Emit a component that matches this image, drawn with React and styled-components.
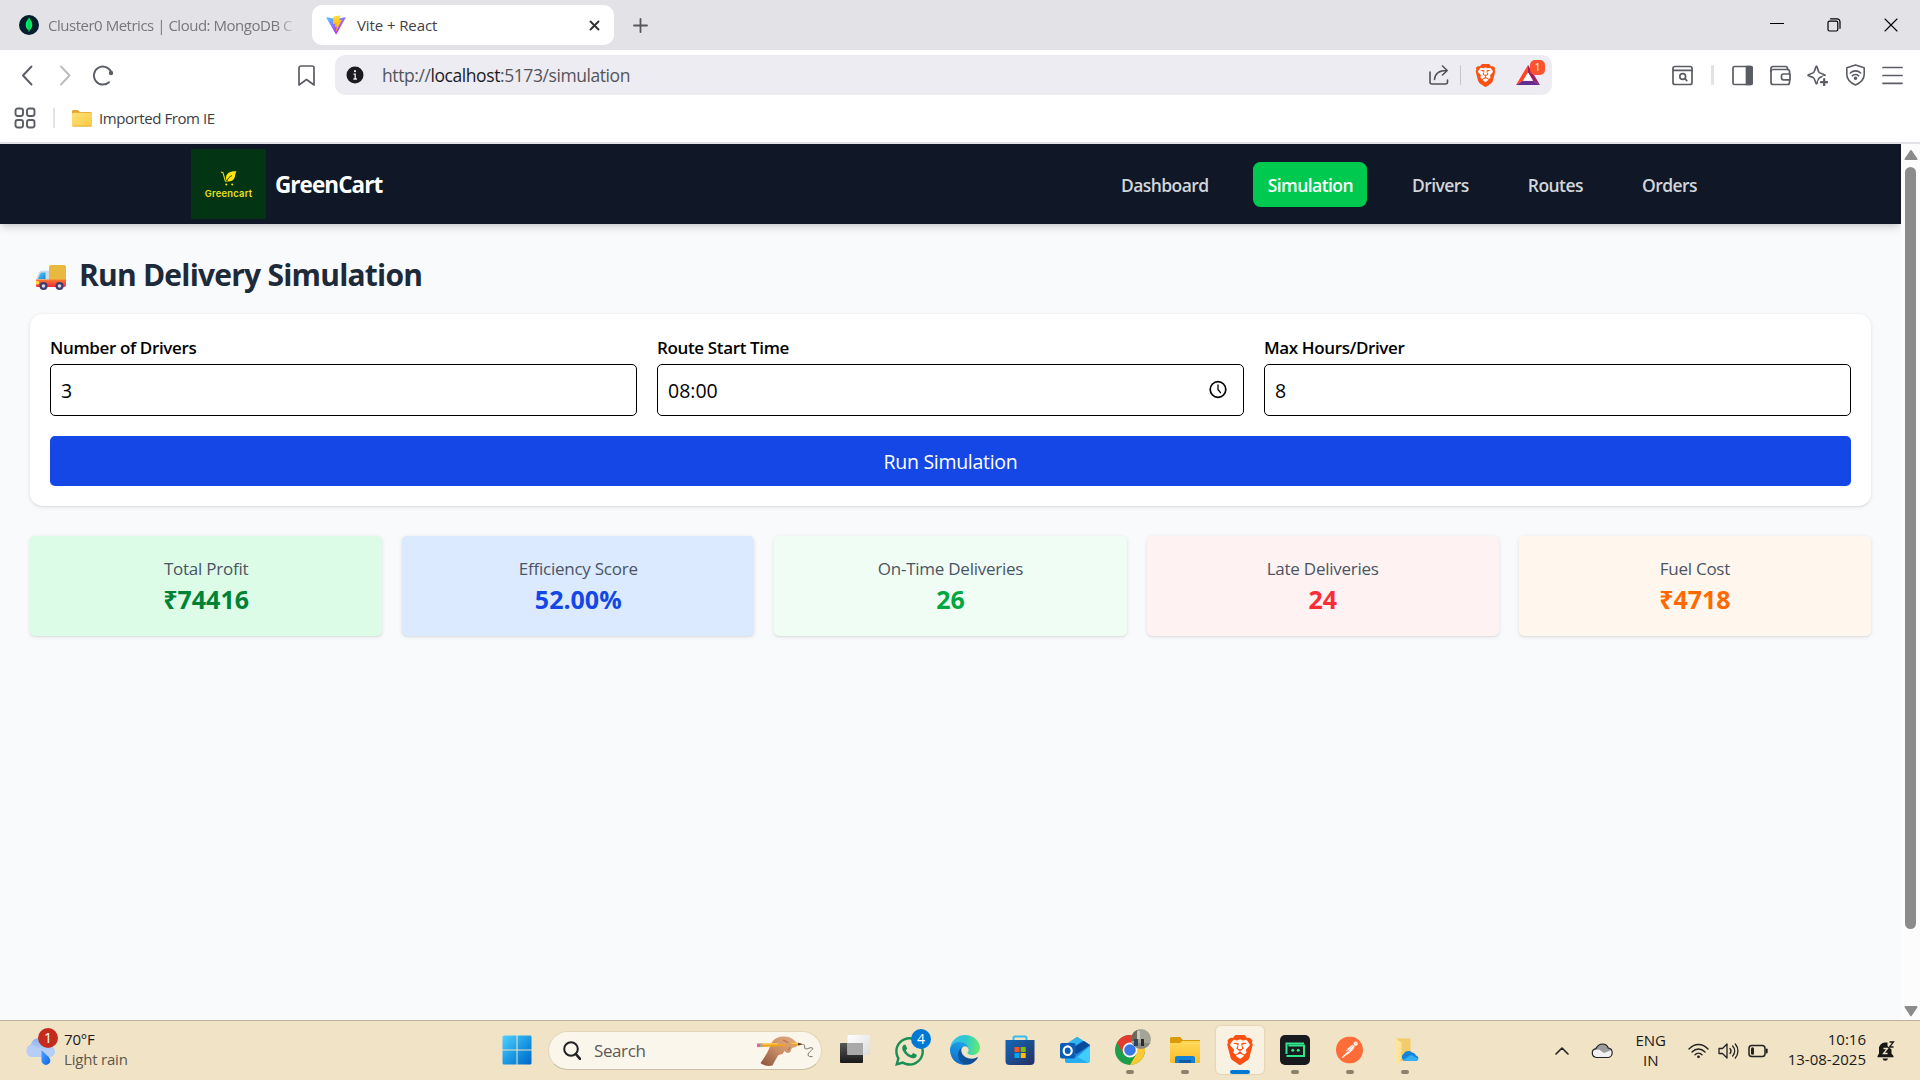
import React from "react";
import styled, { createGlobalStyle } from "styled-components";
import { SiBrave, SiPostman } from "react-icons/si";
import { FaWhatsapp } from "react-icons/fa";

const GlobalStyle = createGlobalStyle`
  * { box-sizing: border-box; }
  body { margin: 0; background: #f9fafb; overflow: hidden; }
  button, input { font: inherit; letter-spacing: inherit; }
  svg { display: block; flex: none; }
`;

const Screen = styled.div`
  width: 1920px;
  height: 1080px;
  display: flex;
  flex-direction: column;
  font-family: "Open Sans", "Noto Sans", sans-serif;
  color: #000;
`;

/* ---------- Browser chrome ---------- */

const TabStrip = styled.div`
  height: 50px;
  flex: none;
  display: flex;
  align-items: center;
  background: #e3e2e7;
`;

const Tab = styled.div`
  width: ${(p) => (p.$active ? 302 : 312)}px;
  height: 40px;
  display: flex;
  align-items: center;
  padding: ${(p) => (p.$active ? "0 14px 0 14px" : "0 14px 0 19px")};
  gap: ${(p) => (p.$active ? 11 : 9)}px;
  border-radius: 10px;
  background: ${(p) => (p.$active ? "#fff" : "transparent")};
  color: ${(p) => (p.$active ? "#3f4046" : "#77777c")};
`;

const TabTitle = styled.span`
  flex: 1;
  font-size: 15px;
  line-height: 20px;
  letter-spacing: ${(p) => p.$tracking || 0}px;
  white-space: nowrap;
  ${(p) => p.$fade && "mask-image: linear-gradient(90deg, #000 91%, transparent 100%);"}
`;

const NewTab = styled.div`
  width: 53px;
  display: flex;
  justify-content: center;
`;

const WindowControls = styled.div`
  margin-left: auto;
  display: flex;
  gap: 43px;
  padding-right: 22px;
`;

const Toolbar = styled.div`
  height: 50px;
  flex: none;
  display: flex;
  align-items: center;
  background: #fff;
`;

const NavButtons = styled.div`
  width: 317px;
  display: flex;
  align-items: center;
  gap: 17px;
  padding-left: 17px;
`;

const BookmarkButton = styled.div`
  margin-left: auto;
`;

const AddressBar = styled.div`
  width: 1217px;
  height: 40px;
  margin-left: 18px;
  padding: 0 11px;
  display: flex;
  align-items: center;
  border-radius: 10px;
  background: #edecf2;
`;

const Url = styled.span`
  flex: 1;
  margin-left: 18px;
  font-size: 17.5px;
  line-height: 24px;
  letter-spacing: -0.42px;
  color: #54555b;
  b { font-weight: 400; color: #1b1b1f; }
`;

const AddressActions = styled.div`
  display: flex;
  align-items: center;
  gap: 9px;
`;

const Divider = styled.span`
  width: ${(p) => p.$w || 3}px;
  height: 20px;
  margin: 0 1.5px;
  flex: none;
  border-radius: 1px;
  background: ${(p) => p.$c || "#e2e1e6"};
`;

const ShieldsButton = styled.div`
  margin-left: 3px;
`;

const RewardIcon = styled.div`
  position: relative;
  margin-left: 10px;
  width: 25px;
`;

const RewardBadge = styled.span`
  position: absolute;
  left: 14px;
  top: -5px;
  width: 15px;
  height: 15px;
  border-radius: 5px;
  background: #ff5230;
  color: #fff;
  font-size: 10px;
  line-height: 15px;
  text-align: center;
`;

const Extensions = styled.div`
  margin-left: auto;
  padding-right: 17px;
  display: flex;
  align-items: center;
  gap: 16.5px;
`;

const BookmarksBar = styled.div`
  height: 44px;
  flex: none;
  display: flex;
  align-items: center;
  padding: 0 0 6px 14px;
  border-bottom: 2px solid #e3e2e7;
  background: #fff;
`;

const BookmarkFolder = styled.div`
  margin-left: 17px;
  display: flex;
  align-items: center;
  gap: 7px;
  font-size: 15px;
  line-height: 20px;
  letter-spacing: -0.43px;
  color: #3c3d43;
`;

const BarDivider = styled(Divider)`
  margin: 0 0 0 17px;
  width: 2px;
`;

/* ---------- Page ---------- */

const Viewport = styled.div`
  height: 876px;
  flex: none;
  display: flex;
  background: #f9fafc;
`;

const Page = styled.div`
  width: 1901px;
`;

const Scrollbar = styled.div`
  width: 19px;
  display: flex;
  flex-direction: column;
  align-items: center;
  padding: 6px 0 3px;
  background: #fcfcfc;
`;

const ScrollThumb = styled.div`
  width: 11px;
  height: 762px;
  margin: 6px 0 auto;
  border-radius: 6px;
  background: #8b8b8b;
`;

const Navbar = styled.header`
  height: 80px;
  padding: 5px 190px 5px 191px;
  display: flex;
  align-items: center;
  justify-content: space-between;
  background: #101726;
  box-shadow: 0 5px 8px -1px rgba(0, 0, 0, 0.13), 0 2px 5px -2px rgba(0, 0, 0, 0.12);
`;

const Brand = styled.div`
  display: flex;
  align-items: center;
  gap: 9px;
  color: #fff;
  font-size: 22.5px;
  font-weight: 700;
  line-height: 35px;
  letter-spacing: -0.95px;
`;

const BrandLogo = styled.div`
  width: 75px;
  height: 70px;
  padding-top: 20px;
  display: flex;
  flex-direction: column;
  align-items: center;
  background: #033413;
`;

const BrandLogoText = styled.span`
  margin-top: 2px;
  font-family: Inter, "Open Sans", sans-serif;
  font-size: 9.4px;
  font-weight: 600;
  line-height: 11px;
  letter-spacing: 0.25px;
  color: #efe01c;
`;

const NavLinks = styled.nav`
  display: flex;
  gap: 30px;
`;

const NavLink = styled.a`
  height: 45px;
  padding: 0 14px 0 15px;
  border-radius: 7.5px;
  font-size: 17.5px;
  font-weight: 600;
  line-height: 47px;
  letter-spacing: -0.56px;
  color: ${(p) => (p.$active ? "#fff" : "#d1d5dc")};
  background: ${(p) => (p.$active ? "#00c950" : "transparent")};
`;

const Content = styled.main`
  padding: 30px;
`;

const Heading = styled.h1`
  margin: 0 0 20px;
  display: flex;
  align-items: center;
  gap: 12px;
  padding: 2px 0 0 5px;
  font-size: 30px;
  font-weight: 700;
  line-height: 38px;
  letter-spacing: -0.78px;
  color: #1e2939;
  svg { margin-top: 5px; }
`;

const FormCard = styled.section`
  padding: 20px;
  display: grid;
  grid-template-columns: repeat(3, 1fr);
  gap: 20px;
  border-radius: 12.5px;
  background: #fff;
  box-shadow: 0 1px 4px rgba(0, 0, 0, 0.1), 0 1px 2px -1px rgba(0, 0, 0, 0.14);
`;

const Field = styled.label`
  display: flex;
  flex-direction: column;
  font-size: 17px;
  font-weight: 600;
  line-height: 27px;
  letter-spacing: -0.36px;
`;

const InputBox = styled.div`
  height: 52px;
  margin-top: 3px;
  display: flex;
  align-items: center;
  padding: 0 15px 0 10px;
  border: 1px solid #000;
  border-radius: 5px;
`;

const Input = styled.input`
  flex: 1;
  min-width: 0;
  padding: 2px 0 0;
  border: 0;
  outline: 0;
  background: none;
  font-size: 19.5px;
  font-weight: 400;
  line-height: 28px;
  letter-spacing: 0;
  color: #000;
`;

const RunButton = styled.button`
  grid-column: 1 / -1;
  height: 50px;
  padding: 0;
  border: 0;
  border-radius: 5px;
  background: #1447e6;
  color: #fff;
  font-size: 19.5px;
  letter-spacing: -0.3px;
`;

const Stats = styled.section`
  margin-top: 30px;
  display: grid;
  grid-template-columns: repeat(5, 1fr);
  gap: 20px;
`;

const StatCard = styled.div`
  height: 100px;
  padding-top: 19px;
  text-align: center;
  border-radius: 5px;
  background: ${(p) => p.$bg};
  box-shadow: 0 1px 4px rgba(0, 0, 0, 0.1), 0 1px 2px -1px rgba(0, 0, 0, 0.14);
`;

const StatLabel = styled.div`
  font-size: 17px;
  line-height: 28px;
  letter-spacing: -0.25px;
  color: #4a5565;
`;

const StatValue = styled.div`
  font-size: 25px;
  font-weight: 700;
  line-height: 33px;
  color: ${(p) => p.$color};
`;

/* ---------- Taskbar ---------- */

const Taskbar = styled.footer`
  height: 60px;
  flex: none;
  display: flex;
  align-items: center;
  border-top: 1px solid #bdb09b;
  background: #f1e3c5;
`;

const Weather = styled.div`
  width: 489px;
  padding-left: 25px;
  display: flex;
  align-items: center;
  gap: 8px;
  letter-spacing: -0.2px;
`;

const BadgeHost = styled.div`
  position: relative;
`;

const CountBadge = styled.span`
  position: absolute;
  left: ${(p) => p.$left}px;
  top: ${(p) => p.$top}px;
  width: 20px;
  height: 20px;
  border-radius: 50%;
  background: ${(p) => p.$bg};
  color: #fff;
  font-size: 14px;
  line-height: 20px;
  text-align: center;
`;

const TwoLines = styled.div`
  font-size: 15px;
  line-height: 20px;
  color: #1a1a1a;
  text-align: ${(p) => p.$align || "left"};
  white-space: nowrap;
  padding-bottom: 3px;
  small { display: block; font-size: 15px; color: #5d584d; }
`;

const SearchPill = styled.div`
  width: 274px;
  height: 39px;
  margin: 0 5px 0 4px;
  padding: 0 7px 0 14px;
  display: flex;
  align-items: center;
  border: 1px solid #e2d6bc;
  border-bottom-color: #c9bda4;
  border-radius: 20px;
  background: #fbf6eb;
  font-size: 17px;
  line-height: 24px;
  letter-spacing: -0.4px;
  color: #5c5a56;
`;

const SearchText = styled.span`
  flex: 1;
  margin-left: 13px;
`;

const AppSlot = styled.div`
  width: 55px;
  height: 59px;
  display: flex;
  flex-direction: column;
  align-items: center;
  padding-top: 5px;
`;

const AppTile = styled.div`
  width: 48px;
  height: 48px;
  display: flex;
  flex-direction: column;
  align-items: center;
  justify-content: space-between;
  padding-top: 9px;
  border-radius: 5px;
  background: ${(p) => (p.$active ? "#f9f1e2" : "transparent")};
  box-shadow: ${(p) => (p.$active ? "0 0 1px 1px rgba(190,170,130,.25)" : "none")};
`;

const RunMark = styled.span`
  width: ${(p) => (p.$active ? 20 : 8)}px;
  height: 4px;
  border-radius: 2px;
  background: ${(p) => (p.$active ? "#0078d4" : "#8b826e")};
`;

const Avatar = styled.span`
  position: absolute;
  left: 16px;
  top: -6px;
`;

const Tray = styled.div`
  margin-left: auto;
  padding-right: 25px;
  display: flex;
  align-items: center;
`;

const Lang = styled(TwoLines)`
  width: 34px;
  margin: 0 20px 0 21px;
  padding-bottom: 1px;
`;

const StatusIcons = styled.div`
  display: flex;
  gap: 9px;
  margin-right: 20px;
`;

const Clock = styled(TwoLines)`
  margin-right: 11px;
`;

const TrayCloud = styled.div`
  margin-left: 22px;
`;

/* ---------- Icons ---------- */

const Stroke = ({ w = 21, h = 21, c = "#5b5d64", sw = 1.7, children }) => (
  <svg width={w} height={h} viewBox={`0 0 ${w} ${h}`} fill="none" stroke={c} strokeWidth={sw} strokeLinecap="round" strokeLinejoin="round">
    {children}
  </svg>
);

const MongoIcon = () => (
  <svg width="20" height="20" viewBox="0 0 20 20">
    <circle cx="10" cy="10" r="10" fill="#001e2b" />
    <path d="M10 2.6C11.7 4.8 13.4 7 13.3 10c-.1 2.600-1.500 4.300-2.900 5.400L10.200 17h-.5l-.2-1.700C8 14.100 6.700 12.500 6.700 10c0-3 1.800-5 3.300-7.400z" fill="#00ed64" />
    <path d="M10 4v12" stroke="#00a35c" strokeWidth=".6" />
  </svg>
);

const ViteIcon = () => (
  <svg width="20" height="20" viewBox="0 0 410 404">
    <defs>
      <linearGradient id="va" x1="6" y1="33" x2="235" y2="344" gradientUnits="userSpaceOnUse">
        <stop stopColor="#41d1ff" /><stop offset="1" stopColor="#bd34fe" />
      </linearGradient>
      <linearGradient id="vb" x1="195" y1="9" x2="236" y2="293" gradientUnits="userSpaceOnUse">
        <stop stopColor="#ffea83" /><stop offset=".08" stopColor="#ffdd35" /><stop offset="1" stopColor="#ffa800" />
      </linearGradient>
    </defs>
    <path d="M399.641 59.525L215.643 388.545C211.844 395.338 202.084 395.378 198.228 388.618L10.582 59.556C6.381 52.19 12.68 43.267 21.028 44.759L205.223 77.682a10 10 0 0 0 3.541-.006L389.122 44.803c8.32-1.516 14.649 7.337 10.519 14.722z" fill="url(#va)" />
    <path d="M292.965 1.574L156.801 28.255a5 5 0 0 0-4.030 4.611L144.395 174.330c-.197 3.332 2.863 5.918 6.115 5.168l37.910-8.749c3.547-.818 6.752 2.306 6.023 5.873l-11.263 55.153c-.758 3.712 2.727 6.886 6.352 5.785l23.415-7.114c3.630-1.102 7.118 2.081 6.350 5.796l-17.899 86.633c-1.120 5.419 6.088 8.374 9.094 3.728l2.008-3.103L323.454 102.072c1.858-3.707-1.346-7.935-5.418-7.150l-39.022 7.532c-3.667.707-6.787-2.708-5.752-6.296l25.469-88.291c1.036-3.594-2.094-7.012-5.766-6.293z" fill="url(#vb)" />
  </svg>
);

const CloseTabIcon = () => <Stroke w={11} h={11} c="#333" sw={1.9}><path d="M1.500 1.500l8 8M9.500 1.500l-8 8" /></Stroke>;
const PlusIcon = () => <Stroke w={15} h={15} c="#54565b" sw={1.8}><path d="M7.500 1v13M1 7.500h13" /></Stroke>;

const MinimizeIcon = () => <Stroke w={14} h={14} c="#000" sw={1}><path d="M0 5.500h14" /></Stroke>;
const RestoreIcon = () => (
  <Stroke w={14} h={14} c="#000" sw={1.200}>
    <rect x="1" y="3.200" width="9.800" height="9.800" rx="1.500" />
    <path d="M3.500 .8h6.500a3 3 0 0 1 3 3v6.500" />
  </Stroke>
);
const CloseWindowIcon = () => <Stroke w={14} h={14} c="#000" sw={1.100}><path d="M1 1l12 12M13 1L1 13" /></Stroke>;

const BackIcon = () => <Stroke sw={1.900}><path d="M14.500 1.500L6 10.500l8.500 9" /></Stroke>;
const ForwardIcon = () => <Stroke sw={1.900} c="#bcbcc0"><path d="M6 1.500l8.500 9-8.500 9" /></Stroke>;
const ReloadIcon = () => (
  <Stroke sw={1.900}>
    <path d="M16 17.200a9 9 0 1 1 1.800-11" />
    <circle cx="18" cy="8" r="2.200" fill="#5b5d64" stroke="none" />
  </Stroke>
);
const BookmarkIcon = () => <Stroke><path d="M3 3a2 2 0 0 1 2-2h11a2 2 0 0 1 2 2v17l-7.500-5.500L3 20z" /></Stroke>;
const InfoIcon = () => (
  <svg width="18" height="18" viewBox="0 0 18 18">
    <circle cx="9" cy="9" r="8.500" fill="#1b1b1f" />
    <circle cx="9" cy="5.200" r="1.100" fill="#edecf2" />
    <path d="M7.500 8.200H9.200V13M7.400 13h3.500" stroke="#edecf2" strokeWidth="1.300" fill="none" />
  </svg>
);
const ShareIcon = () => (
  <Stroke w={20} h={20} c="#515257" sw={1.600}>
    <path d="M1 7v10a2 2 0 0 0 2 2h13.500a2 2 0 0 0 2-2v-2" />
    <path d="M5.500 14.500C6 9 9.500 5.500 17.500 5.500M13.500 1l4.700 4.500-4.700 4.500" />
  </Stroke>
);
const BatIcon = () => (
  <svg width="24" height="20" viewBox="0 0 24 20">
    <path d="M12 0L0 20l7-4 5-8.500z" fill="#ff4724" />
    <path d="M12 0l12 20-7-4-5-8.500z" fill="#9e1f63" />
    <path d="M0 20h24l-7-4.200H7z" fill="#662d91" />
    <path d="M12 7.500L7 15.800h10z" fill="#fff" />
  </svg>
);
const FindIcon = () => (
  <Stroke>
    <rect x="1" y="1.500" width="19" height="18" rx="2" /><path d="M1 5.300h19" />
    <circle cx="10.700" cy="11.500" r="2.900" /><path d="M13 13.700l1.800 1.900" />
  </Stroke>
);
const SidebarIcon = () => (
  <Stroke><rect x="1" y="1.500" width="19" height="18" rx="1.500" /><path d="M14.500 1.500H19a1 1 0 0 1 1 1v16a1 1 0 0 1-1 1h-4.500z" fill="#5b5d64" /></Stroke>
);
const WalletIcon = () => (
  <Stroke>
    <rect x="1" y="4.500" width="18.500" height="15" rx="2" />
    <path d="M1 6.500V3.500a2 2 0 0 1 2-2h12.500a2 2 0 0 1 2 2v1" />
    <path d="M20 9h-6.500a2 2 0 0 0-2 2v1.800a2 2 0 0 0 2 2H20z" fill="#fff" />
  </Stroke>
);
const SparkleIcon = () => (
  <Stroke>
    <path d="M9.500 1c.8 0 1.300 5 2.700 6.500 1.300 1.300 6 1.800 6 2.700 0 .8-4.500 1.400-6 2.800-1.400 1.500-1.900 6-2.700 6-.9 0-1.400-4.500-2.800-6C5.300 11.600.9 11 .9 10.200c0-.9 4.500-1.400 5.800-2.700C8.100 6 8.600 1 9.500 1z" />
    <path d="M17.200 13.500v7.200M13.600 17.100h7.200" stroke="#fff" strokeWidth="5" />
    <path d="M17.200 14v6.500M14 17.200h6.500" strokeWidth="2.200" />
  </Stroke>
);
const ShieldIcon = () => (
  <Stroke h={22} sw={1.600}>
    <path d="M10.500 1l8.700 2.800v6.500c0 5-3.500 8.500-8.700 10.700-5.200-2.200-8.700-5.700-8.700-10.700V3.800z" />
    <path d="M5.300 9c3-2.800 7.400-2.800 10.400 0M7.300 11.800c2-1.600 4.400-1.600 6.400 0" />
    <circle cx="10.500" cy="14.300" r="1" fill="#5b5d64" />
  </Stroke>
);
const MenuIcon = () => <Stroke><path d="M1 2.500h19M1 10.500h19M1 18.300h19" /></Stroke>;

const AppsIcon = () => (
  <Stroke w={22} h={22} sw={1.900}>
    <rect x="1.500" y="1.500" width="7.500" height="7.500" rx="2.200" /><rect x="13" y="1.500" width="7.500" height="7.500" rx="2.200" />
    <rect x="1.500" y="13" width="7.500" height="7.500" rx="2.200" /><rect x="13" y="13" width="7.500" height="7.500" rx="2.200" />
  </Stroke>
);
const FolderIcon = () => (
  <svg width="20" height="17" viewBox="0 0 20 17">
    <defs><linearGradient id="fo" x1="0" y1="0" x2="1" y2="1"><stop stopColor="#ffe27a" /><stop offset="1" stopColor="#f9c93f" /></linearGradient></defs>
    <path d="M0 1.500A1.500 1.500 0 0 1 1.500 0h4.200l2.300 2h10.500A1.500 1.500 0 0 1 20 3.500V8H0z" fill="#e5a32a" />
    <rect y="2.800" width="20" height="13.700" rx="1.500" fill="url(#fo)" />
    <path d="M.5 16.200h19" stroke="#d9a83a" strokeWidth=".8" />
  </svg>
);

const CartIcon = () => (
  <svg width="17" height="17" viewBox="0 0 17 17">
    <path d="M16.500 2.300C10.500 1.800 6.500 4 6 8.200c-.1 1.800.3 3 1 4.100C9.800 13 13.500 12 14.700 8.500 15.300 6.500 15.300 4 16.500 2.300z" fill="#fde310" />
    <path d="M7 12c.8-2.600 2.400-4.300 5-5.500" stroke="#033413" strokeWidth=".9" fill="none" />
    <path d="M1 3l2 .7 2.200 8 1.300 1.200" stroke="#e3d81c" strokeWidth="1.100" fill="none" />
    <circle cx="6.300" cy="15.600" r="1" fill="#fde310" /><circle cx="12.200" cy="15.600" r="1" fill="#fde310" />
  </svg>
);

const TruckIcon = () => (
  <svg width="32" height="27" viewBox="0 0 32 27">
    <defs>
      <linearGradient id="tr" x1="0" y1="0" x2="0" y2="1"><stop stopColor="#ff7a2f" /><stop offset="1" stopColor="#ee2b3b" /></linearGradient>
      <linearGradient id="tg" x1="0" y1="0" x2="1" y2="1"><stop stopColor="#4fd0ff" /><stop offset="1" stopColor="#1b84c9" /></linearGradient>
    </defs>
    <rect x="14" y="1" width="17" height="17" rx="2" fill="#e8b83f" />
    <path d="M14 6.500H7.500C5 6.500 4 8 3 10.500L1 16v6h13z" fill="#cfdbe8" />
    <path d="M7 8.500h3.500v6.500H2.800L5 10.200C5.500 9 6 8.500 7 8.500z" fill="url(#tg)" />
    <path d="M1 15.500h30V21a2 2 0 0 1-2 2H2.500A1.500 1.500 0 0 1 1 21.500z" fill="url(#tr)" />
    <path d="M1 17h1.500a1.200 1.200 0 0 1 0 3.500H1z" fill="#ffd84a" />
    <circle cx="8.500" cy="22" r="4" fill="#433b6b" /><circle cx="8.500" cy="22" r="1.800" fill="#d9d5ea" />
    <circle cx="24.500" cy="22" r="4" fill="#433b6b" /><circle cx="24.500" cy="22" r="1.800" fill="#d9d5ea" />
  </svg>
);

const TimeIcon = () => <Stroke w={20} h={20} c="#000" sw={1.700}><circle cx="10" cy="9.500" r="7.800" /><path d="M10 5v4.500l2.500 3.200" strokeWidth="1.300" /></Stroke>;

const ScrollArrow = ({ down }) => (
  <svg width="14" height="11" viewBox="0 0 14 11">
    <path d={down ? "M1.500 0h11a1 1 0 0 1 .8 1.600L7.800 9.800a1 1 0 0 1-1.600 0L.7 1.600A1 1 0 0 1 1.500 0z" : "M1.500 10h11a1 1 0 0 0 .8-1.600L7.800.5a1 1 0 0 0-1.600 0L.7 8.400a1 1 0 0 0 .8 1.600z"} fill="#8b8b8b" />
  </svg>
);

const RainIcon = () => (
  <svg width="31" height="28" viewBox="0 0 31 28">
    <defs>
      <linearGradient id="cl" x1="0" y1="0" x2="0" y2="1"><stop stopColor="#8cb2f2" /><stop offset="1" stopColor="#cbdcfa" /></linearGradient>
      <linearGradient id="dr" x1="0" y1="0" x2="1" y2="1"><stop stopColor="#52a2ff" /><stop offset="1" stopColor="#0b66ee" /></linearGradient>
    </defs>
    <path d="M7 20a6.500 6.500 0 0 1-1-12.500C7 3 10.500 1 14.500 1c5 0 8.500 3.500 9 8 3.500 0 6.500 2 6.500 5.500S27.500 20 24 20z" fill="url(#cl)" />
    <path d="M6.500 20a6 6 0 0 1 0-11.800c3.500 0 4.500 1.500 6 3.300 3-1 5.500 1 7 3.500 4-1.500 8-2 10.300-1.500C30 18 27.500 20 24 20z" fill="#b6cdf8" />
    <path d="M16.500 13v10.500a4.400 4.400 0 0 0 8.800 0C25.300 20 20.500 17.500 16.500 13z" fill="url(#dr)" />
  </svg>
);

const WindowsIcon = () => (
  <svg width="30" height="30" viewBox="0 0 30 30">
    <defs><linearGradient id="wi" x1="0" y1="0" x2="1" y2="1"><stop stopColor="#4fd2ff" /><stop offset=".6" stopColor="#1490df" /><stop offset="1" stopColor="#0067c5" /></linearGradient></defs>
    <path d="M2 .5h12.500v14H.5V2A1.500 1.500 0 0 1 2 .5zM15.500.500H28A1.500 1.500 0 0 1 29.500 2v12.500h-14zM.5 15.500h14v14H2A1.500 1.500 0 0 1 .5 28zM15.500 15.500h14V28a1.500 1.500 0 0 1-1.500 1.500H15.500z" fill="url(#wi)" />
  </svg>
);
const SearchIcon = () => (
  <svg width="18" height="19" viewBox="0 0 18 19"><circle cx="8" cy="8" r="6.800" fill="none" stroke="#202124" strokeWidth="2" /><path d="M12.800 13l4.200 4.800" stroke="#202124" strokeWidth="2.600" strokeLinecap="round" /></svg>
);
const PencilHand = () => (
  <svg width="58" height="32" viewBox="0 0 58 32">
    <defs><linearGradient id="ph" x1="1" y1="0" x2="0" y2="1"><stop stopColor="#e5ad82" /><stop offset=".5" stopColor="#c98e66" /><stop offset="1" stopColor="#88513a" /></linearGradient></defs>
    <path d="M15 9c2-4.500 6-7 11-7.500 5-.4 9 .5 12 3.500 2.500 2.500 4 5 2 7l-4 1-2 4.500-3 .5-2.500-2-2 3-4 1c-2 3-4.500 7.500-6 10.500-4 1-8.500.5-12-2.500C9 22 13 15 15 9z" fill="url(#ph)" />
    <path d="M4 8.500l38-.8 4 1.300-4 1.500-38 1.600z" fill="#f3a21c" /><path d="M4 8.500l38-.8v1l-38 1.100z" fill="#ffd05a" />
    <path d="M1 8.500h3v3.600H1z" fill="#e06a7e" /><path d="M4 8.500h2.500v3.600H4z" fill="#9fa7ad" /><path d="M42 7.700l5.500 1.500-5.500 1.300z" fill="#5b4330" />
    <path d="M22 5.500c4-2 8-1 11 1l5 4-4 2-6-3.500-6 1z" fill="#d99b70" /><path d="M27 5l5 2.500M34 12l-2 3.500" stroke="#9d6846" strokeWidth=".9" />
    <path d="M47.500 9c2 2 .5 4.500 2 5 2 .5 5-2.500 7-1 1.500 1.500-5 4.500-4.500 7 .3 1.500 2.500 2 4.500 1.500" stroke="#77736c" fill="none" />
  </svg>
);
const TaskViewIcon = () => (
  <svg width="30" height="28" viewBox="0 0 30 28">
    <defs>
      <linearGradient id="ta" x1="0" y1="0" x2="0" y2="1"><stop stopColor="#565656" /><stop offset="1" stopColor="#191919" /></linearGradient>
      <linearGradient id="tb" x1="0" y1="0" x2="1" y2="1"><stop stopColor="#fff" /><stop offset="1" stopColor="#dcdcdc" /></linearGradient>
    </defs>
    <rect y="8" width="23" height="20" rx="1" fill="url(#ta)" /><rect x="7.500" y="0" width="22.500" height="20" rx="1" fill="url(#tb)" />
    <path d="M7.500 8H23v12H7.500z" fill="#a9a9a9" />
  </svg>
);
const EdgeIcon = () => (
  <svg width="30" height="30" viewBox="0 0 256 256">
    <defs>
      <linearGradient id="e1" x1="0" y1=".5" x2="1" y2=".6"><stop stopColor="#0c59a4" /><stop offset="1" stopColor="#114a8b" /></linearGradient>
      <linearGradient id="e2" x1=".7" y1=".2" x2=".3" y2="1"><stop stopColor="#1b9de2" /><stop offset=".6" stopColor="#1383d8" /><stop offset="1" stopColor="#0a62bd" /></linearGradient>
      <linearGradient id="e3" x1="0" y1=".4" x2="1" y2=".5"><stop stopColor="#35c1f1" /><stop offset=".5" stopColor="#2cc9cf" /><stop offset="1" stopColor="#66eb6e" /></linearGradient>
    </defs>
    <path d="M231 190.500c-3.400 1.800-6.900 3.400-10.500 4.700a101.900 101.900 0 0 1-35.900 6.500c-47.300 0-88.500-32.500-88.500-74.300 0-11.400 6.400-21.900 16.600-27.300-42.800 1.800-53.800 46.400-53.800 72.500 0 74 68.100 81.400 82.800 81.400 7.900 0 19.800-2.300 27-4.600l1.300-.4a128.300 128.300 0 0 0 66.600-52.800 4 4 0 0 0-5.600-5.700z" fill="url(#e1)" />
    <path d="M105.700 241.400a79.200 79.200 0 0 1-22.700-21.300 80.700 80.700 0 0 1 29.500-120c3.200-1.500 8.500-4.100 15.600-4a32.400 32.400 0 0 1 25.700 13 31.900 31.900 0 0 1 6.300 18.700c0-.2 24.500-79.600-80-79.600-43.900 0-80 41.700-80 78.200a130.100 130.100 0 0 0 12.100 56 128 128 0 0 0 156.400 67 75.600 75.600 0 0 1-62.800-8z" fill="url(#e2)" />
    <path d="M152.300 148.900c-.9 1-3.400 2.500-3.400 5.600 0 2.600 1.700 5.200 4.800 7.300 14.300 10 41.400 8.600 41.500 8.600a59.600 59.600 0 0 0 30.300-8.300 61.400 61.400 0 0 0 30.400-52.900c.3-22.400-8-37.300-11.300-43.900C223.500 23.900 177.700 0 128 0A128 128 0 0 0 0 126.200c.5-36.500 36.800-66 80-66 3.500 0 23.500.3 42 10a72.600 72.600 0 0 1 30.900 29.300c6.100 10.600 7.200 24.100 7.200 29.500s-2.700 13.300-7.800 19.900z" fill="url(#e3)" />
  </svg>
);
const StoreIcon = () => (
  <svg width="30" height="30" viewBox="0 0 30 30">
    <defs><linearGradient id="st" x1="0" y1="0" x2="1" y2="1"><stop stopColor="#1268b8" /><stop offset="1" stopColor="#262f62" /></linearGradient></defs>
    <path d="M8.500 7V3a1.500 1.500 0 0 1 1.500-1.500h10A1.500 1.500 0 0 1 21.500 3v4" stroke="#36bdf4" strokeWidth="2" fill="none" />
    <path d="M.5 5h29v21a4 4 0 0 1-4 4h-21a4 4 0 0 1-4-4z" fill="url(#st)" />
    <path d="M9.500 12h5v5h-5z" fill="#f35325" /><path d="M15.700 12h5v5h-5z" fill="#81bc06" /><path d="M9.500 18h5v5h-5z" fill="#05a6f0" /><path d="M15.700 18h5v5h-5z" fill="#ffba08" />
  </svg>
);
const OutlookIcon = () => (
  <svg width="30" height="30" viewBox="0 0 30 30">
    <path d="M5 10L17 2l13 8v15a3 3 0 0 1-3 3H8a3 3 0 0 1-3-3z" fill="#1f8fe0" />
    <path d="M6 9.500L17 2l6 3.500L9 15z" fill="#30b5f0" /><path d="M24 6l6 4-13 9-8-4z" fill="#0a4a9c" />
    <path d="M30 11v14a3 3 0 0 1-3 3H10z" fill="#40cdfa" /><path d="M6 16l22 11.500a3 3 0 0 1-1 .5H8a3 3 0 0 1-3-3z" fill="#27aef0" />
    <rect y="8" width="15.500" height="15.500" rx="2" fill="#0b5cb5" /><ellipse cx="7.700" cy="15.700" rx="4" ry="4.300" fill="none" stroke="#fff" strokeWidth="2.200" />
  </svg>
);
const ChromeIcon = () => (
  <svg width="30" height="30" viewBox="0 0 30 30">
    <circle cx="15" cy="15" r="15" fill="#1e9e4b" />
    <path d="M15 8h13.300A15 15 0 0 1 15 30l6.500-11.300z" fill="#fcc934" />
    <path d="M2 7.500A15 15 0 0 1 28.300 8H15l-6.500 10.700z" fill="#e33b2e" />
    <circle cx="15" cy="15" r="7.400" fill="#fff" /><circle cx="15" cy="15" r="5.800" fill="#3b78e7" />
  </svg>
);
const AvatarPhoto = () => (
  <svg width="20" height="20" viewBox="0 0 20 20">
    <clipPath id="av"><circle cx="10" cy="10" r="10" /></clipPath>
    <g clipPath="url(#av)">
      <path d="M0 0h20v20H0z" fill="#a3a398" /><path d="M0 0h6v12H0z" fill="#6d675c" /><path d="M6 2h3v8H6z" fill="#c9c8bd" />
      <path d="M0 14h20v6H0z" fill="#8a897e" /><path d="M10 10h3v7h-3z" fill="#2a2b2e" /><path d="M3 10h4v7H3z" fill="#30445c" />
    </g>
  </svg>
);
const ExplorerIcon = () => (
  <svg width="30" height="30" viewBox="0 0 30 30">
    <defs><linearGradient id="ex" x1="0" y1="0" x2="0" y2="1"><stop stopColor="#ffd95c" /><stop offset="1" stopColor="#fbbd27" /></linearGradient></defs>
    <path d="M0 3.500A1.500 1.500 0 0 1 1.500 2h8.800l2.500 3H30v8H0z" fill="#d99a0c" /><path d="M0 8h10l2.500-2H30v20.500A1.500 1.500 0 0 1 28.500 28h-27A1.500 1.500 0 0 1 0 26.500z" fill="url(#ex)" />
    <path d="M5 28v-5a2 2 0 0 1 2-2h16a2 2 0 0 1 2 2v5z" fill="#1482d4" /><path d="M9 25h12v3H9z" fill="#0b5ca8" />
  </svg>
);
const ChatAppIcon = () => (
  <svg width="30" height="30" viewBox="0 0 30 30">
    <rect width="30" height="30" rx="5" fill="#181a1d" /><path d="M6.500 19V8.500h17.500" stroke="#2fe58d" strokeWidth="2" fill="none" />
    <path d="M8.500 10.500H24V21H10l-3.500 0" stroke="#2fe58d" strokeWidth="2" fill="none" /><circle cx="12.800" cy="15.300" r="1.500" fill="#2fe58d" /><circle cx="18.200" cy="15.300" r="1.500" fill="#2fe58d" />
  </svg>
);
const CloudFolderIcon = () => (
  <svg width="28" height="30" viewBox="0 0 28 30">
    <path d="M5 3.500h14.500V26H8z" fill="#f2cc6b" /><path d="M4 3l6.500 4.500v15L8 29l-4-2.500z" fill="#ffe49a" />
    <path d="M14 26a4 4 0 0 1-1-7.500c1-2.500 5.500-3.500 8-1 2 0 3.500 1.500 4 3 3 .5 3.500 5.500-.5 5.500z" fill="#1583d8" /><path d="M12 25l8-5 7 3.500c-.3 1.800-1.500 2.500-3 2.500H14z" fill="#35aef2" />
  </svg>
);

const BraveLogo = ({ size }) => (
  <svg width={size} height={size} viewBox="0 0 24 24">
    <path d="M6 5.500h12l2 5-3.500 7L12 21l-4.500-3.500L4 10z" fill="#fff" />
    <SiBrave size={24} color="#fb5012" />
  </svg>
);
const PostmanLogo = () => (
  <svg width="27" height="30" viewBox="0 0 27 30">
    <circle cx="13.500" cy="15" r="12" fill="#fff" />
    <g transform="translate(0 1.500)"><SiPostman size={27} color="#ff6c37" /></g>
  </svg>
);

const ChevronUp = () => <Stroke w={14} h={8} c="#222" sw={1.600}><path d="M1 7l6-6 6 6" /></Stroke>;
const CloudIcon = () => (
  <svg width="22" height="16" viewBox="0 0 22 16">
    <path d="M5.500 14.500a4.500 4.500 0 0 1-.6-8.900C6.500 2.500 9 1 11.500 1c3 0 5 1.800 5.700 4 2.500.3 4 2.200 4 4.700 0 2.800-2 4.800-4.700 4.800z" fill="#f1f1f1" />
    <path d="M2 7c1-1.200 2-1.500 3-1.500C6.500 2.500 9 1 11.500 1c3 0 5 1.800 5.700 4 1.500.3 2.500 1 3.300 2L13 10 8 6.500z" fill="#9c9c9c" />
    <path d="M5.500 14.500a4.500 4.500 0 0 1-.6-8.900C6.500 2.500 9 1 11.500 1c3 0 5 1.800 5.700 4 2.500.3 4 2.200 4 4.700 0 2.800-2 4.800-4.700 4.800z" fill="none" stroke="#222" strokeWidth="1.200" />
  </svg>
);
const WifiIcon = () => (
  <Stroke w={21} h={18} c="#222" sw={1.400}><path d="M1 7c5.500-6 13.500-6 19 0M4 10c4-4 9-4 13 0M7 12.700c2-2 5-2 7 0" /><circle cx="10.500" cy="14.800" r="1.400" fill="#222" stroke="none" /></Stroke>
);
const VolumeIcon = () => (
  <Stroke w={21} h={18} c="#222" sw={1.300}><path d="M1 6.500h3.500L9 2v14l-4.500-4.500H1zM12 6.500c1.300 1.500 1.300 3.500 0 5M14.600 4c2.800 2.800 2.800 7.200 0 10M17.300 2c3.500 4 3.500 10 0 14" /></Stroke>
);
const BatteryIcon = () => (
  <Stroke w={20} h={18} c="#222" sw={1.500}><rect x="1" y="3.500" width="16" height="11" rx="2.800" /><path d="M4.500 6.800v4.400" strokeWidth="3" /><path d="M18.700 7.500v3" strokeWidth="2" /></Stroke>
);
const BellIcon = () => (
  <svg width="18" height="20" viewBox="0 0 18 20">
    <path d="M2 12.500V8a6 6 0 0 1 6-6.500h2.500V5l4 3.500v4L16.500 15v1.200H.5V15z" fill="#181818" />
    <path d="M5.500 17.500h5.500a2.800 2.800 0 0 1-5.500 0z" fill="#181818" />
    <path d="M6.500 7.500h4l-4 5h4" stroke="#f1e3c5" strokeWidth="1.300" fill="none" /><path d="M12.500 1h4l-4 5h4" stroke="#181818" strokeWidth="1.300" fill="none" />
  </svg>
);

/* ---------- App ---------- */

const links = ["Dashboard", "Simulation", "Drivers", "Routes", "Orders"];

const stats = [
  { label: "Total Profit", value: "₹74416", bg: "#dcfce7", color: "#008236" },
  { label: "Efficiency Score", value: "52.00%", bg: "#dbeafe", color: "#1447e6" },
  { label: "On-Time Deliveries", value: "26", bg: "#f0fdf4", color: "#00a63e" },
  { label: "Late Deliveries", value: "24", bg: "#fef2f2", color: "#fb2c36" },
  { label: "Fuel Cost", value: "₹4718", bg: "#fff7ed", color: "#ff6900" },
];

const TaskApp = ({ running, active, children }) => (
  <AppSlot>
    <AppTile $active={active}>
      <BadgeHost>{children}</BadgeHost>
      {running && <RunMark $active={active} />}
    </AppTile>
  </AppSlot>
);

export default function App() {
  return (
    <Screen>
      <GlobalStyle />
      <TabStrip>
        <Tab>
          <MongoIcon />
          <TabTitle $fade $tracking={-0.48}>Cluster0 Metrics | Cloud: MongoDB C</TabTitle>
        </Tab>
        <Tab $active>
          <ViteIcon />
          <TabTitle $tracking={-0.1}>Vite + React</TabTitle>
          <CloseTabIcon />
        </Tab>
        <NewTab><PlusIcon /></NewTab>
        <WindowControls>
          <MinimizeIcon />
          <RestoreIcon />
          <CloseWindowIcon />
        </WindowControls>
      </TabStrip>
      <Toolbar>
        <NavButtons>
          <BackIcon />
          <ForwardIcon />
          <ReloadIcon />
          <BookmarkButton><BookmarkIcon /></BookmarkButton>
        </NavButtons>
        <AddressBar>
          <InfoIcon />
          <Url>http://<b>localhost</b>:5173/simulation</Url>
          <AddressActions>
            <ShareIcon />
            <Divider $w={1} $c="#c4c4ca" />
            <ShieldsButton><BraveLogo size={23} /></ShieldsButton>
            <RewardIcon><BatIcon /><RewardBadge>1</RewardBadge></RewardIcon>
          </AddressActions>
        </AddressBar>
        <Extensions>
          <FindIcon />
          <Divider />
          <SidebarIcon />
          <WalletIcon />
          <SparkleIcon />
          <ShieldIcon />
          <MenuIcon />
        </Extensions>
      </Toolbar>
      <BookmarksBar>
        <AppsIcon />
        <BarDivider />
        <BookmarkFolder><FolderIcon />Imported From IE</BookmarkFolder>
      </BookmarksBar>

      <Viewport>
        <Page>
          <Navbar>
            <Brand>
              <BrandLogo>
                <CartIcon />
                <BrandLogoText>Greencart</BrandLogoText>
              </BrandLogo>
              GreenCart
            </Brand>
            <NavLinks>
              {links.map((l) => <NavLink key={l} $active={l === "Simulation"}>{l}</NavLink>)}
            </NavLinks>
          </Navbar>
          <Content>
            <Heading><TruckIcon /><span>Run Delivery Simulation</span></Heading>
            <FormCard>
              <Field>Number of Drivers<InputBox><Input defaultValue="3" /></InputBox></Field>
              <Field>Route Start Time<InputBox><Input defaultValue="08:00" /><TimeIcon /></InputBox></Field>
              <Field>Max Hours/Driver<InputBox><Input defaultValue="8" /></InputBox></Field>
              <RunButton>Run Simulation</RunButton>
            </FormCard>
            <Stats>
              {stats.map((s) => (
                <StatCard key={s.label} $bg={s.bg}>
                  <StatLabel>{s.label}</StatLabel>
                  <StatValue $color={s.color}>{s.value}</StatValue>
                </StatCard>
              ))}
            </Stats>
          </Content>
        </Page>
        <Scrollbar>
          <ScrollArrow />
          <ScrollThumb />
          <ScrollArrow down />
        </Scrollbar>
      </Viewport>

      <Taskbar>
        <Weather>
          <BadgeHost><RainIcon /><CountBadge $left={13} $top={-9} $bg="#c42b1c">1</CountBadge></BadgeHost>
          <TwoLines>70°F<small>Light rain</small></TwoLines>
        </Weather>
        <TaskApp><WindowsIcon /></TaskApp>
        <SearchPill><SearchIcon /><SearchText>Search</SearchText><PencilHand /></SearchPill>
        <TaskApp><TaskViewIcon /></TaskApp>
        <TaskApp><FaWhatsapp size={33} color="#1a8f55" /><CountBadge $left={18} $top={-6} $bg="#0078d4">4</CountBadge></TaskApp>
        <TaskApp><EdgeIcon /></TaskApp>
        <TaskApp><StoreIcon /></TaskApp>
        <TaskApp><OutlookIcon /></TaskApp>
        <TaskApp running><ChromeIcon /><Avatar><AvatarPhoto /></Avatar></TaskApp>
        <TaskApp running><ExplorerIcon /></TaskApp>
        <TaskApp running active><BraveLogo size={30} /></TaskApp>
        <TaskApp running><ChatAppIcon /></TaskApp>
        <TaskApp running><PostmanLogo /></TaskApp>
        <TaskApp running><CloudFolderIcon /></TaskApp>
        <Tray>
          <ChevronUp />
          <TrayCloud><CloudIcon /></TrayCloud>
          <Lang $align="center">ENG<br />IN</Lang>
          <StatusIcons><WifiIcon /><VolumeIcon /><BatteryIcon /></StatusIcons>
          <Clock $align="right">10:16<br />13-08-2025</Clock>
          <BellIcon />
        </Tray>
      </Taskbar>
    </Screen>
  );
}
